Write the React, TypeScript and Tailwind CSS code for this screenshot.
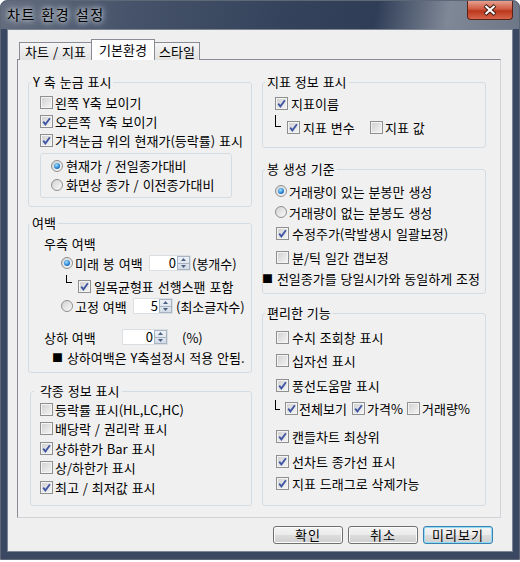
import React from 'react'

const FONT = "font-['Noto_Sans_CJK_KR','Liberation_Sans',sans-serif]"

function Check({ on, className = '' }: { on?: boolean; className?: string }) {
  return (
    <span
      className={`w-[13px] h-[13px] shrink-0 border border-[#8e8f8f] bg-[linear-gradient(135deg,#cfcfcf,#f6f6f6)] shadow-[inset_0_0_0_1px_#f4f4f4] flex items-center justify-center ${className}`}
    >
      {on && (
        <svg width="9" height="9" viewBox="0 0 9 9">
          <path d="M1.2 4.6 L3.4 7.4 L7.9 1.2" stroke="#4056a3" strokeWidth="1.8" fill="none" />
        </svg>
      )}
    </span>
  )
}

function Radio({ on }: { on?: boolean }) {
  return (
    <span className="w-[12px] h-[12px] shrink-0 rounded-full border border-[#8e8f8f] bg-[linear-gradient(135deg,#d2d2d2,#fafafa)] flex items-center justify-center">
      {on && (
        <span className="w-[6px] h-[6px] rounded-full bg-[radial-gradient(circle_at_40%_35%,#a6e4ff,#2a86d8_55%,#0e3f84)]" />
      )}
    </span>
  )
}

function Spin({ value, w }: { value: string; w: string }) {
  return (
    <span className={`${w} h-[16px] shrink-0 bg-white border border-[#dadfe4] flex items-stretch`}>
      <span className="flex-1 text-right pr-[1px] leading-[14px]">{value}</span>
      <span className="w-[13px] flex flex-col border border-[#a7b3c1] bg-[linear-gradient(#eef2f7,#d3dce7)]">
        <span className="flex-1 flex items-center justify-center border-b border-[#a7b3c1]">
          <svg width="5" height="3" viewBox="0 0 5 3"><path d="M0 3 L2.5 0 L5 3 Z" fill="#4d6186" /></svg>
        </span>
        <span className="flex-1 flex items-center justify-center">
          <svg width="5" height="3" viewBox="0 0 5 3"><path d="M0 0 L2.5 3 L5 0 Z" fill="#4d6186" /></svg>
        </span>
      </span>
    </span>
  )
}

function Group({
  title,
  className = '',
  legend = 'ml-[2px]',
  children,
}: {
  title: string
  className?: string
  legend?: string
  children: React.ReactNode
}) {
  return (
    <fieldset className={`border border-[#d3dce3] rounded-[3px] ${className}`}>
      <legend className={`${legend} px-[2px] leading-[14px] whitespace-pre`}>{title}</legend>
      {children}
    </fieldset>
  )
}

function Btn({ label, def }: { label: string; def?: boolean }) {
  return (
    <button
      className={`w-[70px] h-[18px] rounded-[3px] border leading-[14px] tracking-[1px] bg-[linear-gradient(#f3f3f3_0%,#ebebeb_50%,#dddddd_51%,#cfcfcf_100%)] ${
        def ? 'border-[#3c7fb1] shadow-[inset_0_0_0_1px_#8fdcf6]' : 'border-[#707070] shadow-[inset_0_0_0_1px_#fbfbfb]'
      }`}
    >
      {label}
    </button>
  )
}

// the small black square used as a note bullet
const Sq = () => <span className="text-[11px]">■</span>

export default function App() {
  return (
    <div className={`w-[520px] h-[562px] bg-white text-[13px] leading-[15px] [word-spacing:1px] text-black ${FONT}`}>
      <div className="w-[520px] h-[560px] rounded-t-[7px] border border-[#5e6778] bg-[#3a4861] flex flex-col overflow-hidden">
        {/* title bar */}
        <div className="h-[28px] shrink-0 flex justify-between bg-[linear-gradient(100deg,#636d7e_0%,#46536a_25%,#34425b_55%,#2f3d57_72%,#7f8896_86%,#6e7787_100%)]">
          <span className="pl-[6px] pt-[5px] text-[14px] leading-[17px] tracking-[1.5px] [text-shadow:0_0_5px_#e8edf3,0_0_8px_#dfe5ec]">
            차트 환경 설정
          </span>
          <span className="mr-[6px] w-[46px] h-[19px] rounded-b-[4px] border border-t-0 border-[#5b2418] bg-[linear-gradient(#e7a08f_0%,#cf5a40_45%,#b9371d_55%,#d8654a_100%)] flex items-center justify-center">
            <svg width="14" height="12" viewBox="0 0 14 12">
              <path d="M2 1.5 L12 10.5 M12 1.5 L2 10.5" stroke="#3a1a14" strokeWidth="4" />
              <path d="M2.5 2 L11.5 10 M11.5 2 L2.5 10" stroke="#ffffff" strokeWidth="2.2" />
            </svg>
          </span>
        </div>

        {/* client */}
        <div className="mx-[6px] w-[506px] h-[523px] border border-[#7b8593] bg-[#efefef] flex flex-col pt-[9px] pl-[9px]">
          {/* tabs */}
          <div className="flex items-end pl-[2px] h-[21px] -mb-px relative z-10">
            <div className="w-[73px] h-[18px] border border-[#898c95] border-b-0 bg-[linear-gradient(#f5f5f5,#e2e2e2)] flex items-center justify-center leading-[14px]">
              차트 / 지표
            </div>
            <div className="w-[64px] h-[21px] -ml-px border border-[#898c95] border-b-0 bg-white flex items-center justify-center leading-[14px]">
              기본환경
            </div>
            <div className="w-[46px] h-[18px] -ml-px border border-[#898c95] border-b-0 bg-[linear-gradient(#f5f5f5,#e2e2e2)] flex items-center justify-center leading-[14px]">
              스타일
            </div>
          </div>

          {/* panel */}
          <div className="w-[484px] h-[459px] border border-[#898c95] border-r-[#d0d3d8] border-b-[#d0d3d8] bg-[#f0f0f0] flex gap-[10px] pl-[10px] pt-[15px]">
            {/* left column */}
            <div className="flex flex-col w-[224px]">
              <Group title="Y 축 눈금 표시" className="h-[132px]">
                <div className="flex flex-col pl-[11px] pt-[4px]">
                  <div className="h-[19px] flex items-center gap-[2px]">
                    <Check />
                    <span>왼쪽 Y축 보이기</span>
                  </div>
                  <div className="h-[19px] flex items-center gap-[2px]">
                    <Check on />
                    <span className="whitespace-pre">오른쪽  Y축 보이기</span>
                  </div>
                  <div className="h-[19px] flex items-center gap-[2px]">
                    <Check on />
                    <span className="whitespace-nowrap">가격눈금 위의 현재가(등락률) 표시</span>
                  </div>
                  <div className="mt-[3px] w-[192px] h-[45px] border border-[#d3dce3] rounded-[3px] pl-[10px] pt-[2px] flex flex-col">
                    <div className="h-[19px] flex items-center gap-[3px]">
                      <Radio on />
                      <span>현재가 / 전일종가대비</span>
                    </div>
                    <div className="h-[19px] flex items-center gap-[3px]">
                      <Radio />
                      <span>화면상 종가 / 이전종가대비</span>
                    </div>
                  </div>
                </div>
              </Group>

              <Group title="여백" className="mt-[9px] h-[157px]" legend="ml-[1px]">
                <div className="flex flex-col pt-[4px]">
                  <div className="h-[18px] flex items-center pl-[15px]">우측 여백</div>
                  <div className="mt-[2px] h-[18px] flex items-center pl-[32px]">
                    <span className="w-[88px] flex items-center gap-[2px]">
                      <Radio on />
                      <span>미래 봉 여백</span>
                    </span>
                    <Spin value="0" w="w-[42px]" />
                    <span className="ml-[1px]">(봉개수)</span>
                  </div>
                  <div className="mt-[5px] h-[18px] flex items-center pl-[37px]">
                    <span className="self-start mt-[-2px] w-[6px] h-[8px] border-l border-b border-black" />
                    <Check on className="ml-[6px]" />
                    <span className="ml-[3px] whitespace-nowrap">일목균형표 선행스팬 포함</span>
                  </div>
                  <div className="mt-[2px] h-[18px] flex items-center pl-[32px]">
                    <span className="w-[72px] flex items-center gap-[2px]">
                      <Radio />
                      <span>고정 여백</span>
                    </span>
                    <Spin value="5" w="w-[40px]" />
                    <span className="ml-[3px]">(최소글자수)</span>
                  </div>
                  <div className="mt-[13px] h-[18px] flex items-center pl-[15px]">
                    <span className="w-[78px]">상하 여백</span>
                    <Spin value="0" w="w-[46px]" />
                    <span className="ml-[14px]">(%)</span>
                  </div>
                  <div className="mt-[2px] h-[18px] flex items-center pl-[23px] whitespace-pre">
                    <Sq /> 상하여백은 Y축설정시 적용 안됨.
                  </div>
                </div>
              </Group>

              <Group title=" 각종 정보 표시" className="mt-[11px] ml-[2px] w-[222px] h-[122px]" legend="ml-[3px]">
                <div className="flex flex-col pl-[9px] pt-[1.5px]">
                  {[
                    ['등락률 표시(HL,LC,HC)', false],
                    ['배당락 / 권리락 표시', false],
                    ['상하한가 Bar 표시', true],
                    ['상/하한가 표시', false],
                    ['최고 / 최저값 표시', true],
                  ].map(([label, on]) => (
                    <div key={label as string} className="h-[19.5px] flex items-center gap-[2px]">
                      <Check on={on as boolean} />
                      <span>{label}</span>
                    </div>
                  ))}
                </div>
              </Group>
            </div>

            {/* right column */}
            <div className="flex flex-col w-[224px]">
              <Group title="지표 정보 표시" className="h-[73px]">
                <div className="flex flex-col pl-[12px] pt-[5px]">
                  <div className="h-[18px] flex items-center gap-[3px]">
                    <Check on />
                    <span>지표이름</span>
                  </div>
                  <div className="mt-[6px] h-[18px] flex items-center">
                    <span className="self-start mt-[-3px] w-[6px] h-[12px] border-l border-b border-black" />
                    <Check on className="ml-[6px]" />
                    <span className="ml-[3px] w-[67px]">지표 변수</span>
                    <Check />
                    <span className="ml-[2px]">지표 값</span>
                  </div>
                </div>
              </Group>

              <Group title="봉 생성 기준" className="mt-[14px] h-[132px]">
                <div className="flex flex-col pt-[6px]">
                  <div className="h-[18px] flex items-center gap-[2px] pl-[12px]">
                    <Radio on />
                    <span>거래량이 있는 분봉만 생성</span>
                  </div>
                  <div className="mt-[3px] h-[18px] flex items-center gap-[2px] pl-[12px]">
                    <Radio />
                    <span>거래량이 없는 분봉도 생성</span>
                  </div>
                  <div className="mt-[3px] h-[18px] flex items-center gap-[3px] pl-[13px]">
                    <Check on />
                    <span>수정주가(락발생시 일괄보정)</span>
                  </div>
                  <div className="mt-[6px] h-[18px] flex items-center gap-[3px] pl-[13px]">
                    <Check />
                    <span>분/틱 일간 갭보정</span>
                  </div>
                  <div className="mt-[3px] h-[18px] flex items-center ml-[-1px] whitespace-pre">
                    <Sq /> 전일종가를 당일시가와 동일하게 조정
                  </div>
                </div>
              </Group>

              <Group title="편리한 기능" className="mt-[12px] h-[200px]">
                <div className="flex flex-col pl-[13px] pt-[8px]">
                  <div className="h-[18px] flex items-center gap-[3px]">
                    <Check />
                    <span>수치 조회창 표시</span>
                  </div>
                  <div className="mt-[5px] h-[18px] flex items-center gap-[3px]">
                    <Check />
                    <span>십자선 표시</span>
                  </div>
                  <div className="mt-[7px] h-[18px] flex items-center gap-[3px]">
                    <Check on />
                    <span>풍선도움말 표시</span>
                  </div>
                  <div className="mt-[5px] h-[18px] flex items-center ml-[-1px]">
                    <span className="self-start mt-[1px] w-[5px] h-[10px] border-l border-b border-black" />
                    <Check on className="ml-[5px]" />
                    <span className="ml-[1px] w-[53px]">전체보기</span>
                    <Check on />
                    <span className="ml-[2px] w-[40px]">가격%</span>
                    <Check />
                    <span className="ml-[2px]">거래량%</span>
                  </div>
                  <div className="mt-[10px] h-[18px] flex items-center gap-[3px]">
                    <Check on />
                    <span>캔들차트 최상위</span>
                  </div>
                  <div className="mt-[7px] h-[18px] flex items-center gap-[3px]">
                    <Check on />
                    <span>선차트 종가선 표시</span>
                  </div>
                  <div className="mt-[4px] h-[18px] flex items-center gap-[3px]">
                    <Check on />
                    <span>지표 드래그로 삭제가능</span>
                  </div>
                </div>
              </Group>
            </div>
          </div>

          {/* buttons */}
          <div className="w-[484px] mt-[8px] pr-[8px] flex justify-end gap-[5px]">
            <Btn label="확인" />
            <Btn label="취소" />
            <Btn label="미리보기" def />
          </div>
        </div>
      </div>
    </div>
  )
}
